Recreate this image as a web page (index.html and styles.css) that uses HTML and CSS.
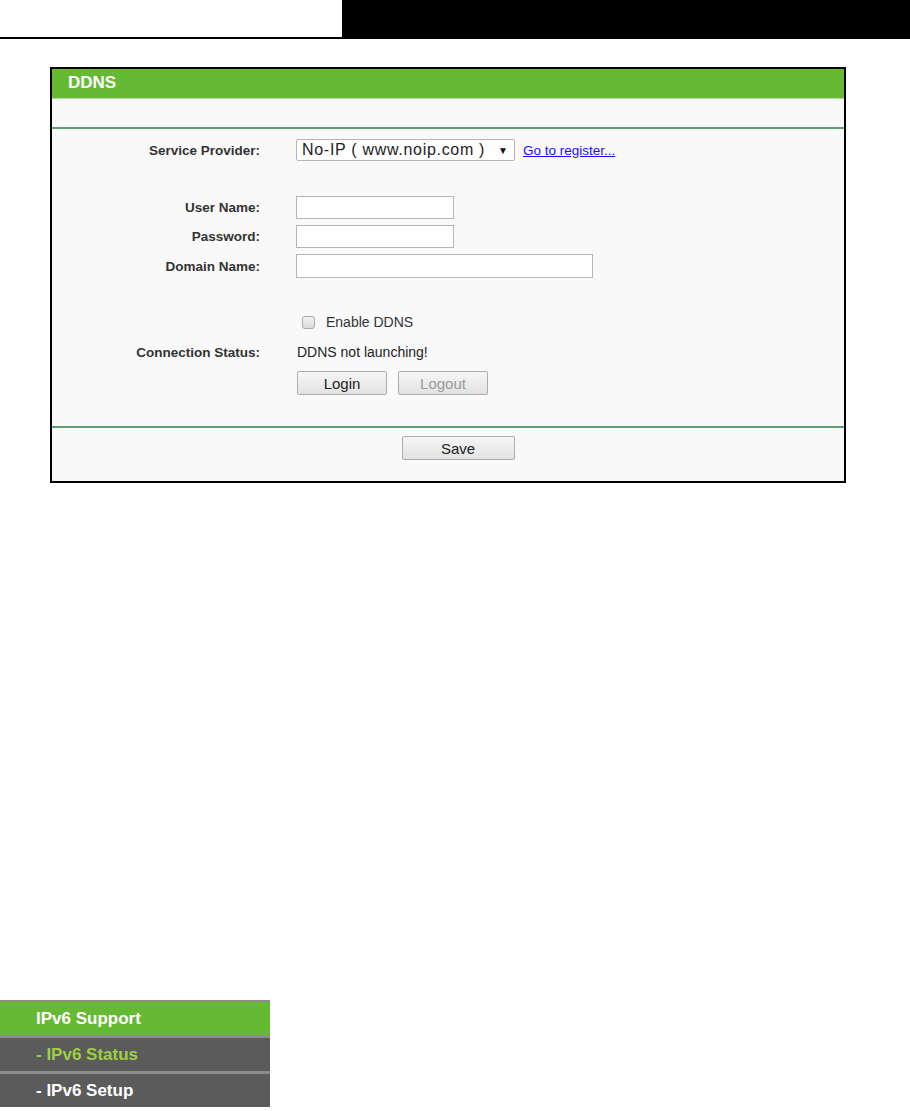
FILE: index.html
```html
<!DOCTYPE html>
<html>
<head>
<meta charset="utf-8">
<link rel="stylesheet" href="styles.css">
</head>
<body>
<div class="topbar">
  <div class="top-white"></div>
  <div class="top-black"></div>
</div>

<div class="panel">
  <div class="panel-head">DDNS</div>
  <div class="panel-spacer"></div>
  <div class="panel-body">
    <div class="row row-provider">
      <div class="label">Service Provider:</div>
      <div class="field">
        <div class="select"><span>No-IP ( www.noip.com )</span><span class="arrow">▼</span></div>
        <a class="link" href="#">Go to register...</a>
      </div>
    </div>
    <div class="row row-input row-first">
      <div class="label">User Name:</div>
      <div class="field"><div class="input short"></div></div>
    </div>
    <div class="row row-input">
      <div class="label">Password:</div>
      <div class="field"><div class="input short"></div></div>
    </div>
    <div class="row row-input">
      <div class="label">Domain Name:</div>
      <div class="field"><div class="input long"></div></div>
    </div>
    <div class="row row-check">
      <div class="label"></div>
      <div class="field"><span class="checkbox"></span><span class="check-label">Enable DDNS</span></div>
    </div>
    <div class="row row-status">
      <div class="label">Connection Status:</div>
      <div class="field status">DDNS not launching!</div>
    </div>
    <div class="row row-buttons">
      <div class="label"></div>
      <div class="field btns">
        <button class="btn">Login</button>
        <button class="btn disabled">Logout</button>
      </div>
    </div>
  </div>
  <div class="panel-foot">
    <button class="btn save">Save</button>
  </div>
</div>

<div class="sidebar">
  <div class="menu-item main">IPv6 Support</div>
  <div class="menu-item sub active">- IPv6 Status</div>
  <div class="menu-item sub">- IPv6 Setup</div>
</div>
</body>
</html>
```

FILE: styles.css
```css
* { box-sizing: border-box; }
html, body { margin: 0; padding: 0; background: #fff; }
body { font-family: "Liberation Sans", Arial, sans-serif; font-size: 14px; color: #333; width: 910px; height: 1111px; overflow: hidden; }

.topbar { display: flex; height: 39px; }
.top-white { width: 342px; height: 39px; background: #fff; border-bottom: 2px solid #000; }
.top-black { flex: 1; background: #000; }

.panel {
  margin: 28px 0 0 50px;
  width: 796px;
  border: 2px solid #000;
  background: #f9f9f9;
}
.panel-head {
  height: 30px;
  background: #66b933;
  border-bottom: 1px solid #b7dc9c;
  color: #fff;
  font-weight: bold;
  font-size: 17px;
  line-height: 28px;
  padding-left: 16px;
}
.panel-spacer { height: 30px; border-bottom: 2px solid #5e9e72; }

.panel-body { padding: 10px 0 31px; border-bottom: 2px solid #5e9e72; }
.row { display: grid; grid-template-columns: 208px 1fr; column-gap: 36px; align-items: center; }
.label { text-align: right; font-weight: bold; font-size: 13.5px; color: #333; }
.field { display: flex; align-items: center; }

.row-provider { height: 22px; }
.select {
  width: 219px; height: 22px;
  border: 1px solid #b5b5b5; border-radius: 2px;
  background: #fff;
  display: flex; align-items: center; justify-content: space-between;
  padding: 0 6px 0 5px;
  font-size: 16px; color: #222;
}
.select span:first-child { letter-spacing: 0.7px; }
.arrow { font-size: 10px; color: #111; }
.link { margin-left: 8px; color: #1a0dff; text-decoration: underline; font-size: 13.5px; }

.row-input { height: 23px; margin-top: 6px; }
.row-first { margin-top: 35px; }
.input { height: 23px; background: #fff; border: 1px solid #b5b5b5; }
.input.short { width: 158px; }
.input.long { width: 297px; height: 24px; }

.row-check { height: 20px; margin-top: 35px; }
.checkbox {
  width: 13px; height: 13px; margin-left: 6px;
  border: 1px solid #aaa; border-radius: 3px;
  background: linear-gradient(#f2f2f2, #dcdcdc);
}
.check-label { margin-left: 11px; font-size: 14px; color: #333; }

.row-status { height: 20px; margin-top: 10px; }
.status { font-size: 14px; color: #222; padding-left: 1px; }

.row-buttons { margin-top: 9px; }
.btns { gap: 11px; padding-left: 1px; }
.btn {
  font-family: "Liberation Sans", Arial, sans-serif;
  font-size: 15px; color: #222;
  height: 24px; width: 90px;
  border: 1px solid #adadad; border-radius: 2px;
  background: linear-gradient(#f6f6f6, #e2e2e2);
  padding: 0; margin: 0;
}
.btn.disabled { color: #999; }

.panel-foot { height: 53px; padding-top: 8px; display: flex; justify-content: center; }
.btn.save { width: 113px; height: 24px; margin-left: 20px; }

.sidebar { margin-top: 517px; width: 270px; }
.menu-item {
  height: 36px;
  border-top: 3px solid #8c8c8c;
  color: #fff; font-weight: bold; font-size: 17px;
  line-height: 33px;
  padding-left: 36px;
  font-family: "Liberation Sans", Arial, sans-serif;
}
.menu-item.main { background: #66b933; border-top-width: 2px; height: 35px; }
.menu-item.sub { background: #5b5b5b; }
.menu-item.active { color: #9ed040; }
```
